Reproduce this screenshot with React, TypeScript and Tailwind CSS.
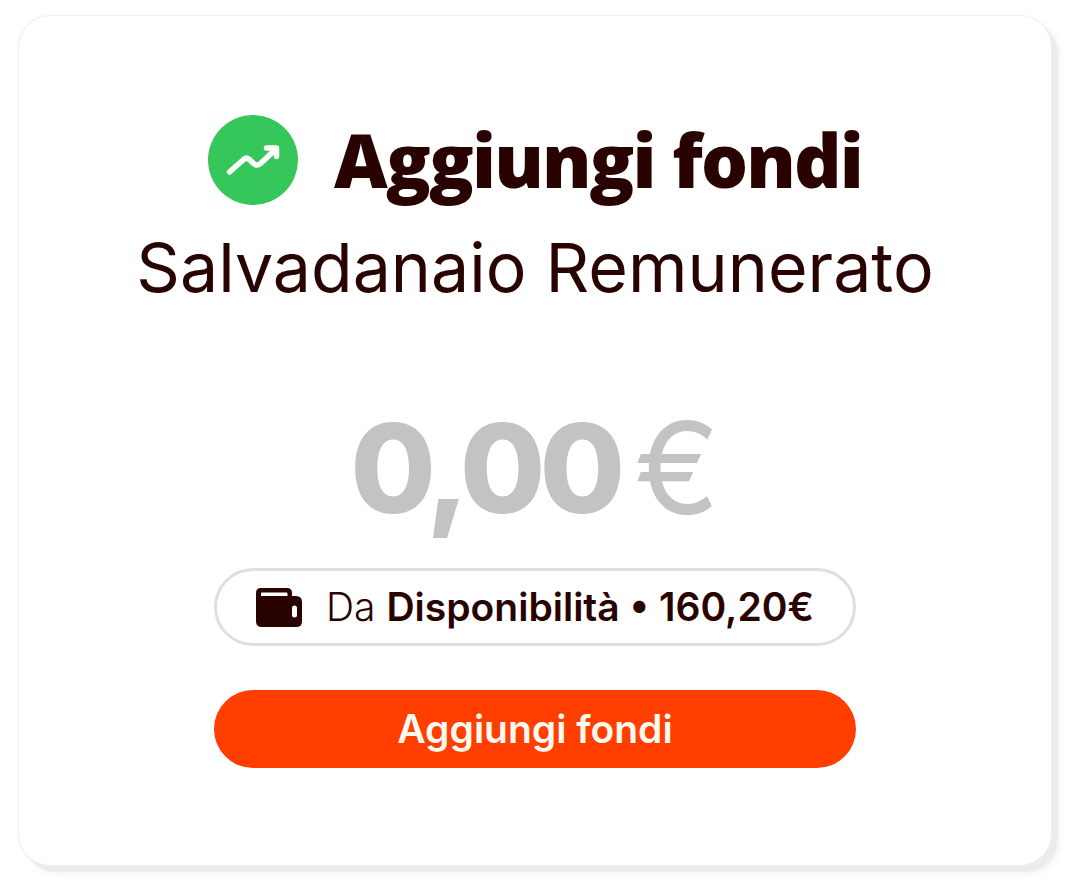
function TrendBadge() {
  return (
    <svg className="size-[90px] shrink-0" viewBox="0 0 90 90" fill="none" aria-hidden="true">
      <circle cx="45" cy="45" r="45" fill="#35c759" />
      <g stroke="#fff" strokeWidth="5.5" strokeLinecap="round" strokeLinejoin="round">
        <path d="M21.500 57L35 45Q38.500 41.500 42 45L45.500 48.500Q49 51.500 52.500 48.500L67 35" />
        <path d="M58.500 33H68.500V41.500" />
      </g>
      <path d="M60 34H69V43Z" fill="#fff" />
    </svg>
  );
}

function WalletIcon() {
  return (
    <svg className="h-10 w-[46px] shrink-0" viewBox="0 0 46 40" aria-hidden="true">
      <path
        fillRule="evenodd"
        fill="#290300"
        d="M5 1H31Q36 1 36 6V9H40Q46 9 46 15V34.500Q46 40 40 40H6Q0 40 0 34.500V6Q0 1 5 1ZM6 5.500Q5 5.500 5 6.500V9H31.500V6.500Q31.500 5.500 30.500 5.500ZM38.500 18.500Q36 18.500 36 21V28Q36 30.500 38.500 30.500Q41 30.500 41 28V21Q41 18.500 38.500 18.500Z"
      />
    </svg>
  );
}

export default function App() {
  return (
    <main className="min-h-screen bg-white px-[18px] pt-[15px] pb-4 font-['Inter',sans-serif] text-[#290300]">
      <section className="flex flex-col items-center rounded-[32px] border border-[#eeeeee] bg-white px-8 pt-[99px] pb-[97px] shadow-[6px_6px_2px_#ebebeb,8px_8px_8px_#f5f5f5]">
        <header className="flex flex-col items-center">
          <div className="flex items-center gap-9">
            <TrendBadge />
            <h1 className="font-['Open_Sans',sans-serif] text-[74px] leading-[88px] font-extrabold tracking-tight whitespace-nowrap">Aggiungi fondi</h1>
          </div>
          <p className="mt-4 text-[68px] leading-[92px] whitespace-nowrap">Salvadanaio Remunerato</p>
        </header>
        <form className="mt-20 flex w-[642px] max-w-full flex-col" onSubmit={(e) => e.preventDefault()}>
          <div className="flex items-center justify-center text-[128px] leading-[150px] text-[#c3c3c3]">
            <input aria-label="Importo" defaultValue="0,00" inputMode="decimal" className="h-[150px] w-[284px] bg-transparent text-[124px] font-extrabold tracking-tighter outline-none" />
            <span>€</span>
          </div>
          <button type="button" className="mt-[25px] flex h-[78px] items-center justify-center gap-6 rounded-full border-[3px] border-[#dfdfdf] text-[39px] whitespace-nowrap">
            <WalletIcon />
            <span className="font-light">Da <strong className="font-semibold">Disponibilità • 160,20€</strong></span>
          </button>
          <button type="submit" className="mt-11 h-[78px] rounded-full bg-[#ff3e00] text-[39px] font-semibold text-[#fffaf0]">
            Aggiungi fondi
          </button>
        </form>
      </section>
    </main>
  );
}
